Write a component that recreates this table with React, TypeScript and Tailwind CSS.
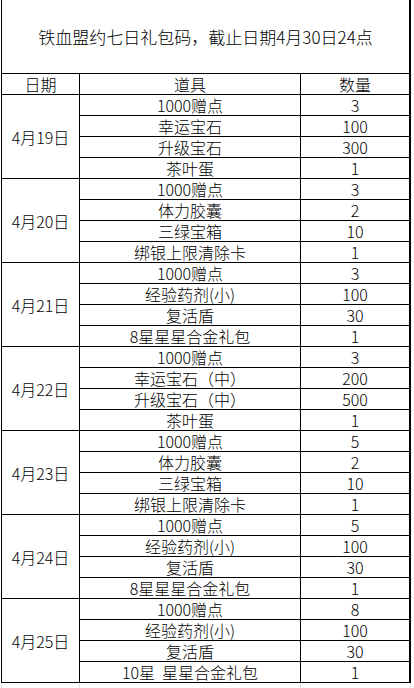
import React from "react";

type Item = [string, string];
type Group = { date: string; items: Item[] };

const groups: Group[] = [
  { date: "4月19日", items: [["1000赠点", "3"], ["幸运宝石", "100"], ["升级宝石", "300"], ["茶叶蛋", "1"]] },
  { date: "4月20日", items: [["1000赠点", "3"], ["体力胶囊", "2"], ["三绿宝箱", "10"], ["绑银上限清除卡", "1"]] },
  { date: "4月21日", items: [["1000赠点", "3"], ["经验药剂(小)", "100"], ["复活盾", "30"], ["8星星星合金礼包", "1"]] },
  { date: "4月22日", items: [["1000赠点", "3"], ["幸运宝石（中）", "200"], ["升级宝石（中）", "500"], ["茶叶蛋", "1"]] },
  { date: "4月23日", items: [["1000赠点", "5"], ["体力胶囊", "2"], ["三绿宝箱", "10"], ["绑银上限清除卡", "1"]] },
  { date: "4月24日", items: [["1000赠点", "5"], ["经验药剂(小)", "100"], ["复活盾", "30"], ["8星星星合金礼包", "1"]] },
  { date: "4月25日", items: [["1000赠点", "8"], ["经验药剂(小)", "100"], ["复活盾", "30"], ["10星  星星合金礼包", "1"]] },
];

export default function App() {
  return (
    <div
      className="w-[414px] h-[688px] bg-white text-black overflow-hidden font-light"
      style={{ fontFamily: '"Noto Sans CJK SC", "Noto Sans", sans-serif' }}
    >
      <div className="ml-[1px] w-[410px] border-l border-r-2 border-black">
        <div className="h-[74px] border-b border-black flex items-center justify-center text-[17px] leading-[18px]">
          铁血盟约七日礼包码，截止日期4月30日24点
        </div>
        <div className="h-[21px] border-b border-black flex text-[16px] leading-[16px]">
          <div className="w-[78px] border-r border-black flex items-center justify-center">日期</div>
          <div className="w-[221px] border-r border-black flex items-center justify-center">道具</div>
          <div className="flex-1 flex items-center justify-center">数量</div>
        </div>
        {groups.map((g) => (
          <div key={g.date} className="h-[84px] border-b border-black flex text-[16px] leading-[16px]">
            <div className="w-[78px] border-r border-black flex items-center justify-center">{g.date}</div>
            <div className="flex-1 flex flex-col">
              {g.items.map(([name, qty], i) => (
                <div
                  key={i}
                  className={
                    i < 3
                      ? "h-[21px] border-b border-black flex"
                      : "h-[20px] flex"
                  }
                >
                  <div className="w-[221px] border-r border-black flex items-center justify-center whitespace-pre">{name}</div>
                  <div className="flex-1 flex items-center justify-center">{qty}</div>
                </div>
              ))}
            </div>
          </div>
        ))}
      </div>
      <div className="ml-[1px] h-[6px] flex">
        <div className="w-[79px] border-l border-r border-[#e2e2e2]"></div>
        <div className="w-[221px] border-r border-[#e2e2e2]"></div>
        <div className="w-[110px] border-r border-[#e2e2e2]"></div>
      </div>
    </div>
  );
}
